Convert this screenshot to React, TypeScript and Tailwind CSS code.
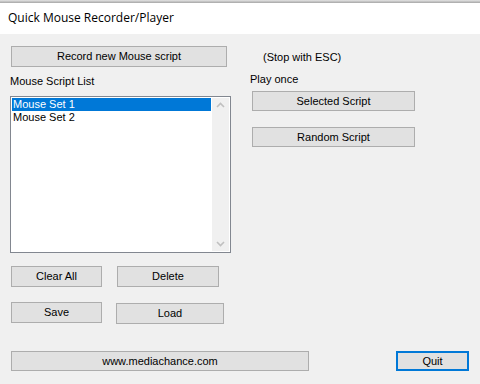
import React from 'react'

const Btn = ({ label, className, focused }: { label: string; className: string; focused?: boolean }) => (
  <button
    className={`flex items-center justify-center bg-[#e1e1e1] text-[11px] leading-none text-black ${
      focused ? 'border-2 border-[#0078d7]' : 'border border-[#adadad]'
    } ${className}`}
  >
    {label}
  </button>
)

export default function App() {
  const scripts = ['Mouse Set 1', 'Mouse Set 2']

  return (
    <div
      className="flex h-[384px] w-[480px] flex-col overflow-hidden bg-[#f0f0f0] text-black"
      style={{ fontFamily: '"Liberation Sans", Arial, sans-serif' }}
    >
      {/* window title */}
      <div className="h-[3px] bg-linear-to-b from-[#e4e4e4] to-[#a6a6a6]" />
      <div
        className="flex h-[31px] items-center bg-white pl-[8px] pb-[2px] text-[12px]"
        style={{ fontFamily: '"Open Sans", "Liberation Sans", sans-serif' }}
      >
        Quick Mouse Recorder/Player
      </div>

      <div className="flex">
        {/* left column */}
        <div className="ml-[10px] flex w-[221px] flex-col">
          <Btn label="Record new Mouse script" className="ml-[1px] mt-[12px] h-[21px] w-[216px]" />
          <div className="mt-[8px] h-[13px] text-[11px] leading-[13px]">Mouse Script List</div>
          <div className="mt-[8px] flex h-[157px] w-[221px] border border-[#828790] bg-white p-[1px]">
            <div className="flex-1 pr-[1px] text-[11px]">
              {scripts.map((s, i) => (
                <div
                  key={s}
                  className={`h-[13px] pl-[1px] leading-[13px] ${i === 0 ? 'bg-[#0078d7] text-white' : ''}`}
                >
                  {s}
                </div>
              ))}
            </div>
            <div className="flex w-[17px] flex-col items-center justify-between bg-[#f0f0f0] py-[4px]">
              <svg width="9" height="6" viewBox="0 0 9 6">
                <path d="M1 5 L4.5 1.5 L8 5" fill="none" stroke="#c0c0c0" strokeWidth="1.6" />
              </svg>
              <svg width="9" height="6" viewBox="0 0 9 6">
                <path d="M1 1 L4.5 4.5 L8 1" fill="none" stroke="#c0c0c0" strokeWidth="1.6" />
              </svg>
            </div>
          </div>
          <div className="mt-[13px] flex">
            <Btn label="Clear All" className="ml-[1px] h-[21px] w-[91px]" />
            <Btn label="Delete" className="ml-[15px] h-[21px] w-[102px]" />
          </div>
          <div className="mt-[15px] flex">
            <Btn label="Save" className="ml-[1px] h-[21px] w-[91px]" />
            <Btn label="Load" className="ml-[14px] mt-[1px] h-[21px] w-[108px]" />
          </div>
        </div>

        {/* right column */}
        <div className="ml-[19px] flex flex-col">
          <div className="ml-[13px] mt-[17px] h-[13px] text-[11px] leading-[13px]">(Stop with ESC)</div>
          <div className="mt-[9px] h-[13px] text-[11px] leading-[13px]">Play once</div>
          <Btn label="Selected Script" className="ml-[2px] mt-[5px] h-[20px] w-[163px]" />
          <Btn label="Random Script" className="ml-[2px] mt-[16px] h-[20px] w-[163px]" />
        </div>
      </div>

      {/* bottom row */}
      <div className="ml-[11px] mt-[27px] flex">
        <Btn label="www.mediachance.com" className="h-[20px] w-[298px]" />
        <Btn label="Quit" focused className="ml-[87px] h-[20px] w-[73px]" />
      </div>
    </div>
  )
}
